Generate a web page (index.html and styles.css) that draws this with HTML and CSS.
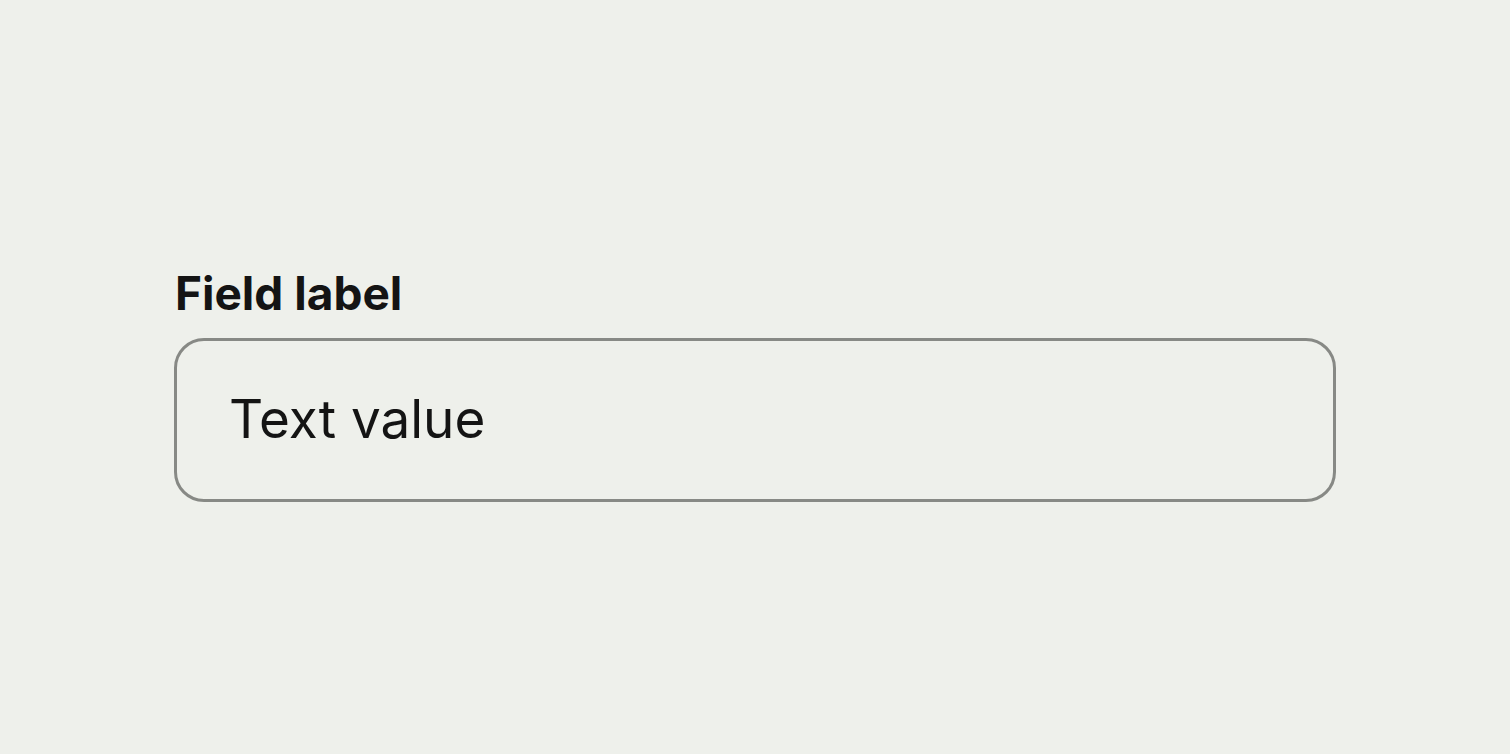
FILE: index.html
```html
<!DOCTYPE html>
<html lang="en">
<head>
<meta charset="utf-8">
<title>Field</title>
<link rel="stylesheet" href="styles.css">
</head>
<body>
<main class="page">
  <div class="field">
    <label class="field-label" for="val">Field label</label>
    <div class="field-box" id="val">Text value</div>
  </div>
</main>
</body>
</html>
```

FILE: styles.css
```css
html, body {
  margin: 0;
  padding: 0;
  height: 100%;
  background: #eef0eb;
}
.page {
  height: 754px;
  display: flex;
  align-items: center;
  justify-content: center;
  font-family: Inter, "Liberation Sans", sans-serif;
  color: #141414;
}
.field {
  width: 1162px;
  display: flex;
  flex-direction: column;
  gap: 22px;
  margin-top: 18px;
}
.field-label {
  font-size: 46px;
  font-weight: 700;
  line-height: 46px;
  padding-left: 1px;
}
.field-box {
  box-sizing: border-box;
  height: 164px;
  border: 3px solid #878985;
  border-radius: 30px;
  padding: 0 52px 2px;
  display: flex;
  align-items: center;
  font-size: 53px;
  font-weight: 400;
}
```
